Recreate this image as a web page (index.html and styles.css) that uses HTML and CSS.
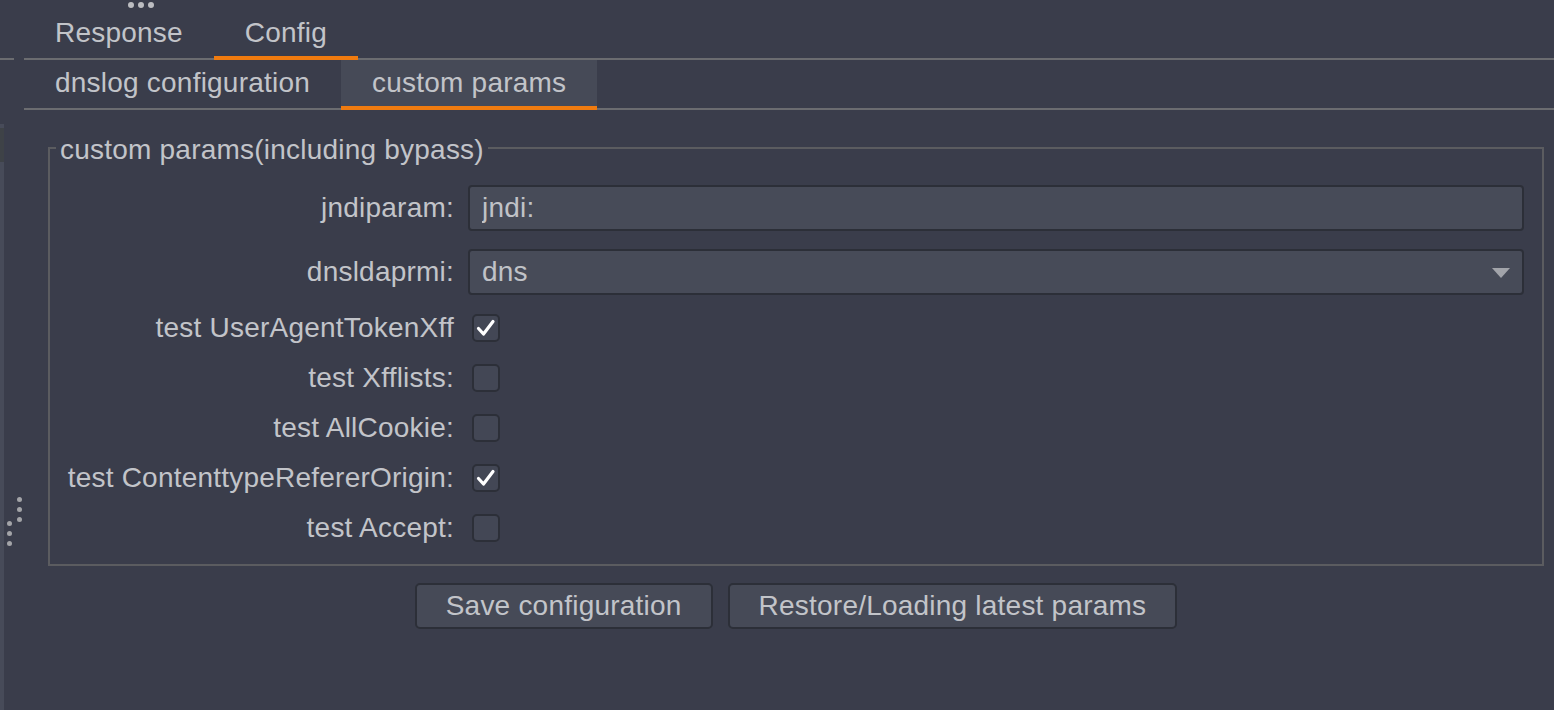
FILE: index.html
```html
<!DOCTYPE html>
<html>
<head>
<meta charset="utf-8">
<link rel="stylesheet" href="styles.css">
</head>
<body>
<div class="app">
  <div class="left-pane">
    <div class="left-head"></div>
    <div class="left-strip"><div class="strip-mark"></div></div>
  </div>
  <div class="divider"></div>
  <div class="main">
    <div class="tabs tabs-top">
      <div class="tab">Response</div>
      <div class="tab active">Config</div>
    </div>
    <div class="tabs tabs-sub">
      <div class="tab">dnslog configuration</div>
      <div class="tab active">custom params</div>
    </div>
    <div class="content">
      <fieldset class="group">
        <legend>custom params(including bypass)</legend>
        <div class="form">
          <div class="row row-field">
            <label class="label">jndiparam:</label>
            <input class="field" type="text" value="jndi:">
          </div>
          <div class="row row-field">
            <label class="label">dnsldaprmi:</label>
            <div class="field combo"><span>dns</span>
              <svg class="arrow" width="18" height="10" viewBox="0 0 18 10"><polygon points="0,0 18,0 9,10" fill="#a2a4aa"/></svg>
            </div>
          </div>
          <div class="row row-check first-check">
            <label class="label">test UserAgentTokenXff</label>
            <span class="check on"><svg width="24" height="24" viewBox="0 0 24 24"><path d="M4.5 12.5 L9.5 18 L19 5.5" fill="none" stroke="#ffffff" stroke-width="3.2" stroke-linecap="round" stroke-linejoin="round"/></svg></span>
          </div>
          <div class="row row-check">
            <label class="label">test Xfflists:</label>
            <span class="check"></span>
          </div>
          <div class="row row-check">
            <label class="label">test AllCookie:</label>
            <span class="check"></span>
          </div>
          <div class="row row-check">
            <label class="label">test ContenttypeRefererOrigin:</label>
            <span class="check on"><svg width="24" height="24" viewBox="0 0 24 24"><path d="M4.5 12.5 L9.5 18 L19 5.5" fill="none" stroke="#ffffff" stroke-width="3.2" stroke-linecap="round" stroke-linejoin="round"/></svg></span>
          </div>
          <div class="row row-check">
            <label class="label">test Accept:</label>
            <span class="check"></span>
          </div>
        </div>
      </fieldset>
      <div class="buttons">
        <button class="btn">Save configuration</button>
        <button class="btn">Restore/Loading latest params</button>
      </div>
    </div>
  </div>
  <div class="grip-top"><span></span><span></span><span></span></div>
  <div class="grip-side">
    <span class="d1"></span><span class="d2"></span><span class="d3"></span>
    <span class="d4"></span><span class="d5"></span><span class="d6"></span>
  </div>
</div>
</body>
</html>
```

FILE: styles.css
```css
* { box-sizing: border-box; }

body {
  margin: 0;
  background: #3a3d4b;
  font-family: "Liberation Sans", Arial, sans-serif;
  font-size: 28px;
  letter-spacing: 0.22px;
  color: #c2c4c9;
  width: 1554px;
  height: 710px;
  overflow: hidden;
}

.app {
  position: relative;
  display: flex;
  height: 710px;
}

.left-pane {
  width: 14px;
  flex: none;
  display: flex;
  flex-direction: column;
}

.left-head {
  height: 60px;
  border-bottom: 2px solid #6b6c70;
}

.left-strip {
  margin-top: 64px;
  width: 4px;
  flex: 1;
  background: #474b59;
  padding-top: 4px;
}

.strip-mark {
  height: 34px;
  background: #3e4247;
}

.divider {
  width: 10px;
  flex: none;
}

.main {
  flex: 1;
  min-width: 0;
  display: flex;
  flex-direction: column;
}

.tabs {
  display: flex;
  border-bottom: 2px solid #6b6c70;
}

.tabs-top { height: 60px; }
.tabs-sub { height: 50px; }

.tab {
  display: flex;
  align-items: center;
  padding: 0 31px;
  margin-bottom: -2px;
  border-bottom: 4px solid transparent;
  white-space: nowrap;
}

.tabs-top .tab { padding-top: 9px; }

.tab.active { border-bottom-color: #f07b0f; }
.tabs-sub .tab.active { background: #464a57; }

.content {
  padding: 0 10px 0 24px;
}

.group {
  margin: 20px 0 0;
  padding: 0 18px 11px 0;
  border: 2px solid #5b5c60;
  min-width: 0;
}

.group legend {
  margin-left: 6px;
  padding: 4px 4px 0;
  line-height: 32px;
}

.form {
  padding-top: 19px;
  display: flex;
  flex-direction: column;
}

.row {
  display: flex;
  align-items: center;
  gap: 14px;
}

.row-field { height: 46px; }
.row-field + .row-field { margin-top: 18px; }
.row-check { height: 50px; }
.first-check { margin-top: 8px; }

.label {
  width: 404px;
  flex: none;
  text-align: right;
  white-space: nowrap;
}

.field {
  flex: 1;
  height: 46px;
  border: 2px solid #2c2f38;
  border-radius: 4px;
  background: #474b58;
  color: #c0c2c7;
  font-family: "Liberation Sans", Arial, sans-serif;
  font-size: 28px;
  letter-spacing: 0.22px;
  padding: 0 12px;
  outline: none;
}

.combo {
  display: flex;
  align-items: center;
  justify-content: space-between;
  padding-right: 12px;
}

.arrow { margin-top: 2px; }

.check {
  width: 28px;
  height: 28px;
  margin-left: 4px;
  border: 2px solid #2c2f38;
  border-radius: 5px;
  background: #434755;
  display: flex;
  align-items: center;
  justify-content: center;
}

.buttons {
  display: flex;
  justify-content: center;
  gap: 15px;
  margin-top: 17px;
}

.btn {
  height: 46px;
  padding: 0 29px;
  border: 2px solid #2c2f38;
  border-radius: 5px;
  background: #464a57;
  color: #c2c4c9;
  font-family: "Liberation Sans", Arial, sans-serif;
  font-size: 28px;
  letter-spacing: 0.22px;
}

.grip-top {
  position: absolute;
  left: 128px;
  top: 2px;
  display: flex;
  gap: 4px;
}

.grip-top span {
  width: 6px;
  height: 6px;
  border-radius: 50%;
  background: #bcbdc1;
}

.grip-side span {
  position: absolute;
  width: 5px;
  height: 5px;
  border-radius: 50%;
  background: #a3a4a8;
}

.grip-side .d1 { left: 17px; top: 497px; }
.grip-side .d2 { left: 17px; top: 507px; }
.grip-side .d3 { left: 17px; top: 517px; }
.grip-side .d4 { left: 7px; top: 521px; }
.grip-side .d5 { left: 7px; top: 531px; }
.grip-side .d6 { left: 7px; top: 541px; }
```
